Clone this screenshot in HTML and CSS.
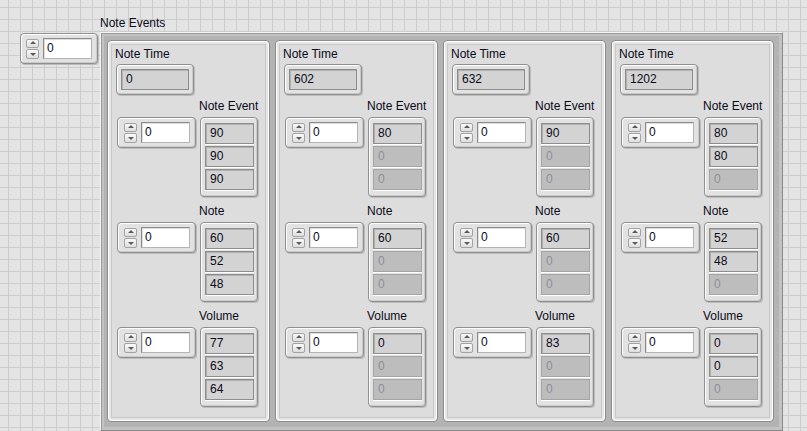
FILE: index.html
```html
<!DOCTYPE html>
<html>
<head>
<meta charset="utf-8">
<link rel="stylesheet" href="styles.css">
</head>
<body>
<div class="panel">
  <div class="num top-index">
    <div class="spin"><span class="up"></span><span class="down"></span></div>
    <div class="box">0</div>
  </div>
  <div class="array">
    <div class="array-label">Note Events</div>
    <div class="array-frame">

      <div class="cluster">
        <div class="c-label">Note Time</div>
        <div class="indicator"><div class="disp">0</div></div>
        <div class="section">
          <div class="s-label">Note Event</div>
          <div class="num"><div class="spin"><span class="up"></span><span class="down"></span></div><div class="box">0</div></div>
          <div class="arr"><div class="el">90</div><div class="el">90</div><div class="el">90</div></div>
        </div>
        <div class="section">
          <div class="s-label">Note</div>
          <div class="num"><div class="spin"><span class="up"></span><span class="down"></span></div><div class="box">0</div></div>
          <div class="arr"><div class="el">60</div><div class="el">52</div><div class="el">48</div></div>
        </div>
        <div class="section">
          <div class="s-label">Volume</div>
          <div class="num"><div class="spin"><span class="up"></span><span class="down"></span></div><div class="box">0</div></div>
          <div class="arr"><div class="el">77</div><div class="el">63</div><div class="el">64</div></div>
        </div>
      </div>

      <div class="cluster">
        <div class="c-label">Note Time</div>
        <div class="indicator"><div class="disp">602</div></div>
        <div class="section">
          <div class="s-label">Note Event</div>
          <div class="num"><div class="spin"><span class="up"></span><span class="down"></span></div><div class="box">0</div></div>
          <div class="arr"><div class="el">80</div><div class="el off">0</div><div class="el off">0</div></div>
        </div>
        <div class="section">
          <div class="s-label">Note</div>
          <div class="num"><div class="spin"><span class="up"></span><span class="down"></span></div><div class="box">0</div></div>
          <div class="arr"><div class="el">60</div><div class="el off">0</div><div class="el off">0</div></div>
        </div>
        <div class="section">
          <div class="s-label">Volume</div>
          <div class="num"><div class="spin"><span class="up"></span><span class="down"></span></div><div class="box">0</div></div>
          <div class="arr"><div class="el">0</div><div class="el off">0</div><div class="el off">0</div></div>
        </div>
      </div>

      <div class="cluster">
        <div class="c-label">Note Time</div>
        <div class="indicator"><div class="disp">632</div></div>
        <div class="section">
          <div class="s-label">Note Event</div>
          <div class="num"><div class="spin"><span class="up"></span><span class="down"></span></div><div class="box">0</div></div>
          <div class="arr"><div class="el">90</div><div class="el off">0</div><div class="el off">0</div></div>
        </div>
        <div class="section">
          <div class="s-label">Note</div>
          <div class="num"><div class="spin"><span class="up"></span><span class="down"></span></div><div class="box">0</div></div>
          <div class="arr"><div class="el">60</div><div class="el off">0</div><div class="el off">0</div></div>
        </div>
        <div class="section">
          <div class="s-label">Volume</div>
          <div class="num"><div class="spin"><span class="up"></span><span class="down"></span></div><div class="box">0</div></div>
          <div class="arr"><div class="el">83</div><div class="el off">0</div><div class="el off">0</div></div>
        </div>
      </div>

      <div class="cluster">
        <div class="c-label">Note Time</div>
        <div class="indicator"><div class="disp">1202</div></div>
        <div class="section">
          <div class="s-label">Note Event</div>
          <div class="num"><div class="spin"><span class="up"></span><span class="down"></span></div><div class="box">0</div></div>
          <div class="arr"><div class="el">80</div><div class="el">80</div><div class="el off">0</div></div>
        </div>
        <div class="section">
          <div class="s-label">Note</div>
          <div class="num"><div class="spin"><span class="up"></span><span class="down"></span></div><div class="box">0</div></div>
          <div class="arr"><div class="el">52</div><div class="el">48</div><div class="el off">0</div></div>
        </div>
        <div class="section">
          <div class="s-label">Volume</div>
          <div class="num"><div class="spin"><span class="up"></span><span class="down"></span></div><div class="box">0</div></div>
          <div class="arr"><div class="el">0</div><div class="el">0</div><div class="el off">0</div></div>
        </div>
      </div>

    </div>
  </div>
</div>
</body>
</html>
```

FILE: styles.css
```css
* { box-sizing: border-box; }
html, body { margin: 0; }
body {
  width: 807px;
  height: 431px;
  overflow: hidden;
  font-family: "Liberation Sans", Arial, sans-serif;
  font-size: 12px;
  color: #0a0a1a;
  background-color: #e4e4e4;
  background-image:
    linear-gradient(to right, #cccccc 1px, transparent 1px),
    linear-gradient(to bottom, #cccccc 1px, transparent 1px);
  background-size: 12px 12px;
  background-position: 8px 7px;
}
.panel {
  display: flex;
  align-items: flex-start;
  padding: 15px 0 0 20px;
}

/* numeric control */
.num {
  display: flex;
  align-items: center;
  gap: 4px;
  width: 78px;
  height: 31px;
  padding: 0 5px 0 5px;
  border: 1px solid #8f8f8f;
  border-radius: 4px;
  background: #e2e2e2;
  box-shadow: inset 1px 1px 0 #ffffff, inset -1px -1px 0 #cbcbcb, 1px 1px 0 #bcbcbc;
}
.top-index { margin-top: 18px; }
.spin {
  display: flex;
  flex-direction: column;
  gap: 1px;
  width: 13px;
  height: 20px;
}
.spin span {
  position: relative;
  flex: 1;
  border: 1px solid #a3a3a3;
  border-radius: 2px;
  background: linear-gradient(#fafafa, #dedede);
}
.spin span::after {
  content: "";
  position: absolute;
  left: 50%;
  top: 50%;
  margin-left: -3px;
  border-left: 3px solid transparent;
  border-right: 3px solid transparent;
}
.spin .up::after { margin-top: -2px; border-bottom: 3px solid #5a5a5a; }
.spin .down::after { margin-top: -1px; border-top: 3px solid #5a5a5a; }
.box {
  flex: 1;
  height: 21px;
  line-height: 19px;
  padding-left: 3px;
  background: #ffffff;
  border: 1px solid #b4b4b4;
  border-top-color: #8c8c8c;
  border-left-color: #8c8c8c;
  box-shadow: inset 1px 1px 0 #dddddd;
}

/* array */
.array { margin-left: 2px; }
.array-label {
  height: 17px;
  line-height: 14px;
  padding-top: 1px;
}
.array-frame {
  display: flex;
  gap: 5px;
  width: 683px;
  height: 399px;
  padding: 7px 0 0 6px;
  border: 1px solid #f4f4f4;
  border-right-color: #8a8a8a;
  border-bottom-color: #8a8a8a;
  background: #b3b3b3;
  box-shadow: inset 1px 1px 0 #9a9a9a, inset 0 0 0 3px #c2c2c2;
}

/* cluster */
.cluster {
  display: flex;
  flex-direction: column;
  align-items: flex-start;
  width: 163px;
  height: 382px;
  flex: none;
  padding: 6px 0 0 7px;
  border: 1px solid #8b8b8b;
  border-radius: 4px;
  background: #dddddd;
  box-shadow: inset 0 0 0 1px #ffffff, inset 0 0 0 3px #e6e6e6, inset 0 0 0 4px #c8c8c8;
}
.c-label {
  line-height: 14px;
  margin-bottom: 3px;
}
.indicator {
  margin-left: 1px;
  width: 78px;
  height: 31px;
  padding: 4px;
  border: 1px solid #8f8f8f;
  border-radius: 4px;
  background: #e2e2e2;
  box-shadow: inset 1px 1px 0 #ffffff, inset -1px -1px 0 #cbcbcb, 1px 1px 0 #bcbcbc;
}
.disp {
  width: 68px;
  height: 21px;
  line-height: 19px;
  padding-left: 4px;
  background: #d3d3d3;
  border: 1px solid #8d8d8d;
  box-shadow: inset 1px 1px 0 #b0b0b0;
}

.section {
  display: grid;
  grid-template-columns: 79px 58px;
  column-gap: 4px;
  margin: 4px 0 3px 2px;
}
.section + .section { margin-top: 4px; }
.s-label {
  grid-column: 2;
  margin-left: -1px;
  line-height: 14px;
  margin-bottom: 4px;
  white-space: nowrap;
}
.section .num { width: 79px; padding: 0 5px 0 6px; }
.arr {
  display: flex;
  flex-direction: column;
  gap: 2px;
  width: 58px;
  height: 80px;
  padding: 5px 0 0 4px;
  border: 1px solid #8f8f8f;
  border-radius: 4px;
  background: #e2e2e2;
  box-shadow: inset 1px 1px 0 #ffffff, inset -1px -1px 0 #cbcbcb, 1px 1px 0 #bcbcbc;
}
.el {
  width: 49px;
  height: 21px;
  line-height: 19px;
  padding-left: 4px;
  background: #d3d3d3;
  border: 1px solid #8d8d8d;
  box-shadow: inset 1px 1px 0 #b0b0b0, 0 1px 0 #ffffff;
}
.el.off {
  background: #bdbdbd;
  border-color: #a5a5a5;
  color: #8e8e9a;
  box-shadow: 0 1px 0 #ffffff;
}
```
